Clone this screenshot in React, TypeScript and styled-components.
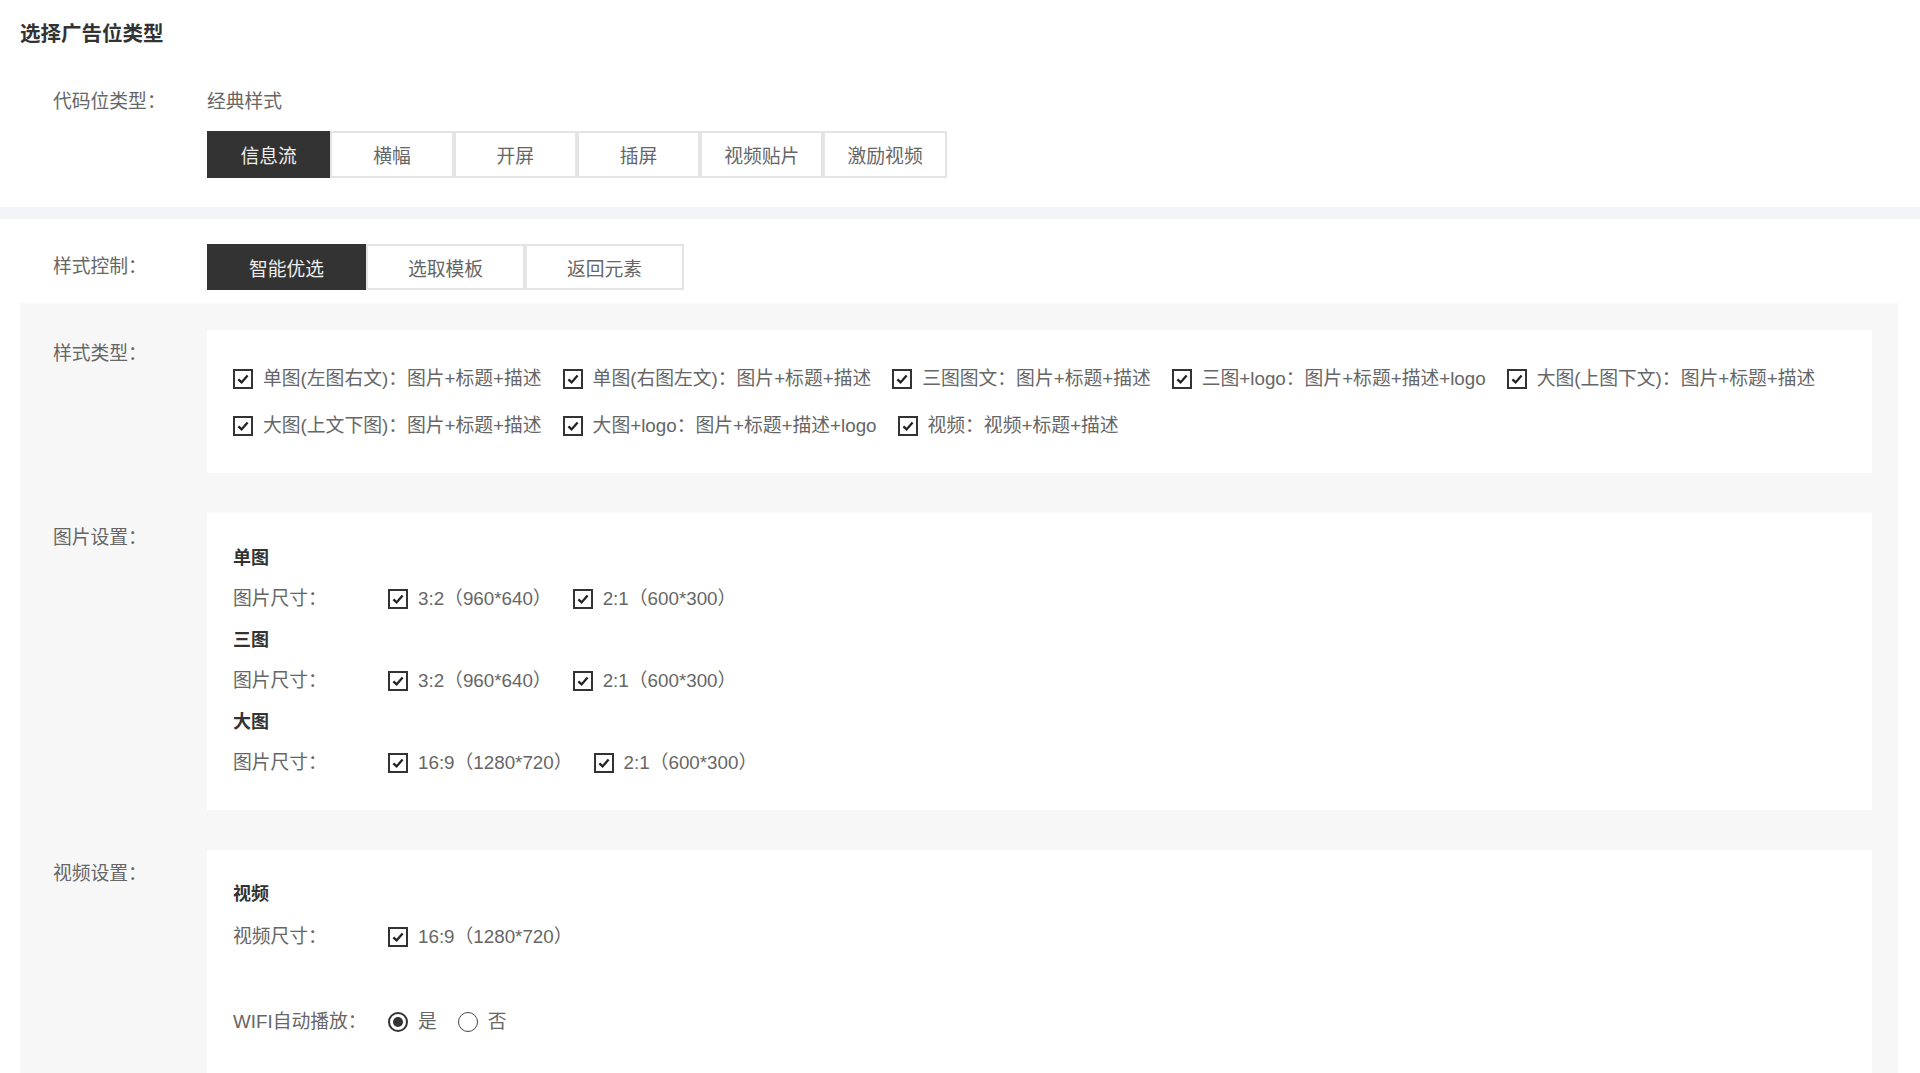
import styled, { createGlobalStyle } from 'styled-components';

const GlobalStyle = createGlobalStyle`
    *, *::before, *::after { box-sizing: border-box; }
    body {
        margin: 0;
        background: #fff;
        font-family: "Liberation Sans", "Noto Sans CJK SC", sans-serif;
        font-size: 18.8px;
        color: #666;
    }
`;

const TopSection = styled.section`
    padding: 21px 22px 29px 20px;
`;

const Title = styled.h1`
    margin: 0;
    font-size: 20.5px;
    line-height: 26px;
    font-weight: 700;
    color: #333;
`;

const Band = styled.div`
    height: 12px;
    background: #f3f4f8;
`;

const ControlSection = styled.section`
    padding: 25px 22px 13px 20px;
`;

const FormRow = styled.div<{ $top?: number; $center?: boolean }>`
    display: flex;
    align-items: ${(p) => (p.$center ? 'center' : 'flex-start')};
    margin-top: ${(p) => p.$top || 0}px;
`;

const Label = styled.div<{ $pad?: number }>`
    flex: 0 0 187px;
    padding-left: 33px;
    padding-top: ${(p) => p.$pad || 0}px;
    line-height: 24px;
    color: #666;
    white-space: nowrap;
`;

const Content = styled.div`
    display: flex;
    flex-direction: column;
    gap: 17px;
`;

const Plain = styled.div`
    line-height: 24px;
    color: #666;
`;

const Segments = styled.div`
    display: flex;
`;

const Segment = styled.button<{ $active?: boolean; $w: number; $h: number }>`
    width: ${(p) => p.$w}px;
    height: ${(p) => p.$h}px;
    font: inherit;
    border: 2px solid ${(p) => (p.$active ? '#333' : '#e4e4e4')};
    background: ${(p) => (p.$active ? '#333' : '#fff')};
    color: ${(p) => (p.$active ? '#eee' : '#666')};
    padding: 0;
    cursor: pointer;
`;

const Panel = styled.div`
    margin: 0 22px 0 20px;
    background: #f7f7f7;
    padding: 27px 26px 0 0;
    display: flex;
    flex-direction: column;
    gap: 40px;
`;

const Card = styled.div<{ $pad: string; $gap: number }>`
    flex: 1;
    background: #fff;
    padding: ${(p) => p.$pad};
    display: flex;
    flex-direction: column;
    gap: ${(p) => p.$gap}px;
`;

const OptionLine = styled.div`
    display: flex;
    align-items: center;
    gap: 21px;
`;

const Option = styled.label`
    display: inline-flex;
    align-items: center;
    gap: 10px;
    line-height: 24px;
    color: #666;
    white-space: nowrap;
`;

const Box = styled.span`
    width: 20px;
    height: 20px;
    border: 2px solid #333;
    background: #fff;
    display: inline-flex;
    align-items: center;
    justify-content: center;
    flex-shrink: 0;
`;

const Radio = styled.span<{ $on?: boolean }>`
    width: 20px;
    height: 20px;
    border-radius: 50%;
    border: ${(p) => (p.$on ? '2px solid #333' : '1.5px solid #444')};
    display: inline-flex;
    align-items: center;
    justify-content: center;
    flex-shrink: 0;
    &::after {
        content: '';
        width: 10px;
        height: 10px;
        border-radius: 50%;
        background: ${(p) => (p.$on ? '#333' : 'transparent')};
    }
`;

const SubTitle = styled.div`
    font-weight: 700;
    font-size: 18px;
    color: #333;
    line-height: 24px;
`;

const SubLabel = styled.div`
    flex: 0 0 155px;
    line-height: 24px;
    color: #666;
    white-space: nowrap;
`;

const SubRow = styled.div<{ $top?: number }>`
    display: flex;
    align-items: center;
    margin-top: ${(p) => p.$top || 0}px;
`;

function Check({ text }: { text: string }) {
    return (
        <Option>
            <Box>
                <svg width="14" height="14" viewBox="0 0 14 14">
                    <path d="M2.4 7.3 L5.6 10.4 L11.6 3.5" fill="none" stroke="#222" strokeWidth="2.3" />
                </svg>
            </Box>
            {text}
        </Option>
    );
}

const adTypes = ['信息流', '横幅', '开屏', '插屏', '视频贴片', '激励视频'];
const controls = ['智能优选', '选取模板', '返回元素'];
const styleRows = [
    [
        '单图(左图右文)：图片+标题+描述',
        '单图(右图左文)：图片+标题+描述',
        '三图图文：图片+标题+描述',
        '三图+logo：图片+标题+描述+logo',
        '大图(上图下文)：图片+标题+描述',
    ],
    ['大图(上文下图)：图片+标题+描述', '大图+logo：图片+标题+描述+logo', '视频：视频+标题+描述'],
];
const imageGroups = [
    { name: '单图', sizes: ['3:2（960*640）', '2:1（600*300）'] },
    { name: '三图', sizes: ['3:2（960*640）', '2:1（600*300）'] },
    { name: '大图', sizes: ['16:9（1280*720）', '2:1（600*300）'] },
];

function App() {
    return (
        <>
            <GlobalStyle />
            <TopSection>
                <Title>选择广告位类型</Title>
                <FormRow $top={43}>
                    <Label>代码位类型：</Label>
                    <Content>
                        <Plain>经典样式</Plain>
                        <Segments>
                            {adTypes.map((t, i) => (
                                <Segment key={t} $active={i === 0} $w={123.3} $h={47}>
                                    {t}
                                </Segment>
                            ))}
                        </Segments>
                    </Content>
                </FormRow>
            </TopSection>
            <Band />
            <ControlSection>
                <FormRow $center>
                    <Label>样式控制：</Label>
                    <Segments>
                        {controls.map((t, i) => (
                            <Segment key={t} $active={i === 0} $w={159} $h={46}>
                                {t}
                            </Segment>
                        ))}
                    </Segments>
                </FormRow>
            </ControlSection>
            <Panel>
                <FormRow>
                    <Label $pad={12}>样式类型：</Label>
                    <Card $pad="37px 26px 35px" $gap={23}>
                        {styleRows.map((row, i) => (
                            <OptionLine key={i}>
                                {row.map((t) => (
                                    <Check key={t} text={t} />
                                ))}
                            </OptionLine>
                        ))}
                    </Card>
                </FormRow>
                <FormRow>
                    <Label $pad={13}>图片设置：</Label>
                    <Card $pad="33px 26px 35px" $gap={17}>
                        {imageGroups.flatMap((g) => [
                            <SubTitle key={g.name}>{g.name}</SubTitle>,
                            <SubRow key={g.name + '-row'}>
                                <SubLabel>图片尺寸：</SubLabel>
                                <OptionLine>
                                    {g.sizes.map((s) => (
                                        <Check key={s} text={s} />
                                    ))}
                                </OptionLine>
                            </SubRow>,
                        ])}
                    </Card>
                </FormRow>
                <FormRow>
                    <Label $pad={12}>视频设置：</Label>
                    <Card $pad="32px 26px 60px" $gap={19}>
                        <SubTitle>视频</SubTitle>
                        <SubRow>
                            <SubLabel>视频尺寸：</SubLabel>
                            <Check text="16:9（1280*720）" />
                        </SubRow>
                        <SubRow $top={42}>
                            <SubLabel>WIFI自动播放：</SubLabel>
                            <OptionLine>
                                <Option>
                                    <Radio $on />是
                                </Option>
                                <Option>
                                    <Radio />否
                                </Option>
                            </OptionLine>
                        </SubRow>
                    </Card>
                </FormRow>
            </Panel>
        </>
    );
}

export default App;
